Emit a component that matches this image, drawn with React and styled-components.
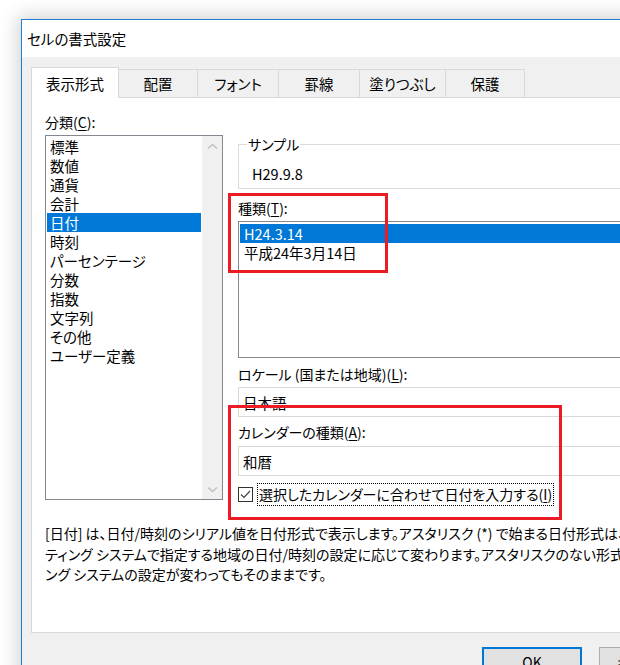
import React from "react";
import styled, { createGlobalStyle } from "styled-components";

const GlobalStyle = createGlobalStyle`
  html, body {
    margin: 0;
    padding: 0;
    background: #fff;
    overflow: hidden;
  }
  body {
    font-family: "Noto Sans CJK JP", "Noto Sans", sans-serif;
    font-size: 14px;
    color: #000;
    font-feature-settings: "palt";
  }
`;

const Page = styled.div`
  position: relative;
  width: 620px;
  height: 665px;
  overflow: hidden;
  padding: 19px 0 0 21px;
  box-sizing: border-box;
`;

const Window = styled.div`
  width: 688px;
  height: 700px;
  box-sizing: border-box;
  border: 1px solid #1b7fd6;
  box-shadow: 0 0 18px 3px rgba(0, 0, 0, 0.18);
  background: #f0f0f0;
  display: flex;
  flex-direction: column;
`;

const TitleBar = styled.div`
  height: 37px;
  background: #fff;
  display: flex;
  align-items: center;
  padding-left: 5px;
  font-size: 14.5px;
`;

const Body = styled.div`
  padding: 10px 9px 0 9px;
  display: flex;
  flex-direction: column;
`;

const TabRow = styled.div`
  display: flex;
  align-items: flex-end;
  height: 30px;
`;

const Tab = styled.div`
  position: relative;
  z-index: ${(p) => (p.$active ? 1 : 0)};
  width: ${(p) => p.$w}px;
  height: ${(p) => (p.$active ? 31 : 28)}px;
  margin-bottom: ${(p) => (p.$active ? -1 : 0)}px;
  margin-left: ${(p) => (p.$first ? 0 : -1)}px;
  box-sizing: border-box;
  border: 1px solid #d9d9d9;
  border-bottom: none;
  background: ${(p) => (p.$active ? "#fff" : "#f0f0f0")};
  display: flex;
  align-items: center;
  justify-content: center;
  line-height: 19px;
  font-size: 14.5px;
`;

const Panel = styled.div`
  height: 536px;
  box-sizing: border-box;
  background: #fff;
  border: 1px solid #d9d9d9;
  padding: 15px 13px 0 13px;
  display: flex;
  flex-direction: column;
  overflow: hidden;
`;

const Columns = styled.div`
  display: flex;
  gap: 15px;
  align-items: flex-start;
`;

const LeftCol = styled.div`
  width: 178px;
  display: flex;
  flex-direction: column;
`;

const RightCol = styled.div`
  flex: 1;
  display: flex;
  flex-direction: column;
`;

const Label = styled.div`
  line-height: 19px;
  height: 19px;
  margin-top: ${(p) => p.$mt || 0}px;
  white-space: nowrap;
`;

const Key = styled.span`
  text-decoration: underline;
  text-underline-offset: 2px;
`;

const ListBox = styled.div`
  margin-top: 3px;
  height: 365px;
  box-sizing: border-box;
  border: 1px solid #828790;
  display: flex;
`;

const ListItems = styled.div`
  flex: 1;
  padding: 1px;
`;

const Item = styled.div`
  height: 19px;
  line-height: 19px;
  padding-left: ${(p) => p.$pl || 3}px;
  white-space: nowrap;
  background: ${(p) => (p.$selected ? "#0078d7" : "transparent")};
  color: ${(p) => (p.$selected ? "#fff" : "#000")};
  font-size: 14.5px;
`;

const ScrollBar = styled.div`
  width: 20px;
  background: #f0f0f0;
  display: flex;
  flex-direction: column;
  justify-content: space-between;
`;

const ScrollArrow = styled.div`
  height: 20px;
  display: flex;
  align-items: center;
  justify-content: center;
`;

const Group = styled.fieldset`
  margin: 22px 0 0 0;
  padding: 10px 0 5px 8px;
  border: 1px solid #dcdcdc;
  min-inline-size: 0;
`;

const Legend = styled.legend`
  padding: 0 1px;
  line-height: 19px;
`;

const SampleValue = styled.div`
  padding-left: 5px;
  line-height: 19px;
  font-size: 14.5px;
`;

const TypeList = styled.div`
  margin-top: 3px;
  height: 137px;
  box-sizing: border-box;
  border: 1px solid #828790;
  padding: 2px 1px;
`;

const Field = styled.div`
  margin-top: ${(p) => p.$mt}px;
  height: 30px;
  box-sizing: border-box;
  border: 1px solid #d9d9d9;
  display: flex;
  align-items: center;
  padding-left: 4px;
  font-size: 14.5px;
`;

const CheckRow = styled.div`
  margin-top: 6px;
  height: 24px;
  display: flex;
  align-items: center;
`;

const CheckBox = styled.div`
  width: 15px;
  height: 15px;
  box-sizing: border-box;
  border: 1px solid #333;
  background: #fff;
  display: flex;
  align-items: center;
  justify-content: center;
`;

const CheckLabel = styled.span`
  margin-left: 4px;
  padding: 1px 1px;
  line-height: 19px;
  border: 1px dotted #000;
  white-space: nowrap;
`;

const Description = styled.div`
  margin-top: 17px;
  line-height: 20.5px;
  white-space: nowrap;
`;

const ButtonRow = styled.div`
  margin-top: 14px;
  display: flex;
  justify-content: flex-end;
  gap: 17px;
`;

const Button = styled.div`
  width: 100px;
  height: 30px;
  box-sizing: border-box;
  border: ${(p) => (p.$default ? "2px solid #0078d7" : "1px solid #adadad")};
  background: #e1e1e1;
  display: flex;
  align-items: center;
  justify-content: center;
`;

const Annotation = styled.div`
  position: absolute;
  left: ${(p) => p.$x}px;
  top: ${(p) => p.$y}px;
  width: ${(p) => p.$w}px;
  height: ${(p) => p.$h}px;
  box-sizing: border-box;
  border: 3px solid #ec1c24;
  pointer-events: none;
`;

const Chevron = ({ down }) => (
  <svg width="11" height="7" viewBox="0 0 11 7">
    <polyline
      points={down ? "1,1.5 5.5,5.5 10,1.5" : "1,5.5 5.5,1.5 10,5.5"}
      fill="none"
      stroke="#c2c2c2"
      strokeWidth="1.6"
    />
  </svg>
);

const tabs = [
  { label: "表示形式", w: 88 },
  { label: "配置", w: 80 },
  { label: "フォント", w: 82 },
  { label: "罫線", w: 82 },
  { label: "塗りつぶし", w: 87 },
  { label: "保護", w: 80 },
];

const categories = [
  "標準",
  "数値",
  "通貨",
  "会計",
  "日付",
  "時刻",
  "パーセンテージ",
  "分数",
  "指数",
  "文字列",
  "その他",
  "ユーザー定義",
];

export default function App() {
  return (
    <>
      <GlobalStyle />
      <Page>
        <Window>
          <TitleBar>セルの書式設定</TitleBar>
          <Body>
            <TabRow>
              {tabs.map((t, i) => (
                <Tab key={t.label} $w={t.w} $active={i === 0} $first={i === 0}>
                  {t.label}
                </Tab>
              ))}
            </TabRow>
            <Panel>
              <Columns>
                <LeftCol>
                  <Label>
                    分類(<Key>C</Key>):
                  </Label>
                  <ListBox>
                    <ListItems>
                      {categories.map((c) => (
                        <Item key={c} $selected={c === "日付"}>
                          {c}
                        </Item>
                      ))}
                    </ListItems>
                    <ScrollBar>
                      <ScrollArrow>
                        <Chevron />
                      </ScrollArrow>
                      <ScrollArrow>
                        <Chevron down />
                      </ScrollArrow>
                    </ScrollBar>
                  </ListBox>
                </LeftCol>
                <RightCol>
                  <Group>
                    <Legend>サンプル</Legend>
                    <SampleValue>H29.9.8</SampleValue>
                  </Group>
                  <Label $mt={10}>
                    種類(<Key>T</Key>):
                  </Label>
                  <TypeList>
                    <Item $selected $pl={4}>
                      H24.3.14
                    </Item>
                    <Item $pl={4}>平成24年3月14日</Item>
                  </TypeList>
                  <Label $mt={7}>
                    ロケール (国または地域)(<Key>L</Key>):
                  </Label>
                  <Field $mt={3}>日本語</Field>
                  <Label $mt={6}>
                    カレンダーの種類(<Key>A</Key>):
                  </Label>
                  <Field $mt={4}>和暦</Field>
                  <CheckRow>
                    <CheckBox>
                      <svg width="11" height="9" viewBox="0 0 11 9">
                        <polyline
                          points="1,4.5 4,7.5 10,1"
                          fill="none"
                          stroke="#444"
                          strokeWidth="1.2"
                        />
                      </svg>
                    </CheckBox>
                    <CheckLabel>
                      選択したカレンダーに合わせて日付を入力する(<Key>I</Key>)
                    </CheckLabel>
                  </CheckRow>
                </RightCol>
              </Columns>
              <Description>
                <div>
                  [日付] は、日付/時刻のシリアル値を日付形式で表示します。アスタリスク (*) で始まる日付形式は、オペレー
                </div>
                <div>
                  ティング システムで指定する地域の日付/時刻の設定に応じて変わります。アスタリスクのない形式は、オペレーティ
                </div>
                <div>ング システムの設定が変わってもそのままです。</div>
              </Description>
            </Panel>
            <ButtonRow>
              <Button $default>OK</Button>
              <Button>キャンセル</Button>
            </ButtonRow>
          </Body>
        </Window>
        <Annotation $x={228} $y={193} $w={160} $h={80} />
        <Annotation $x={228} $y={405} $w={334} $h={115} />
      </Page>
    </>
  );
}
